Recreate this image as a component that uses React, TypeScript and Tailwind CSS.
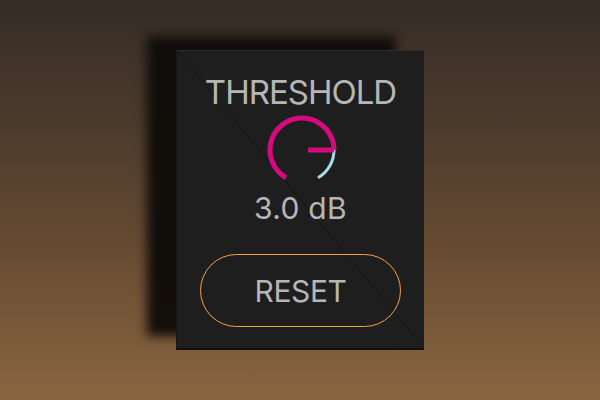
import React from "react";

function Knob() {
  // angles measured from 12 o'clock, clockwise; range -150..150, value at 90
  return (
    <svg width="76" height="76" viewBox="0 0 76 76" className="block">
      <path d="M 22 65.71 A 32 32 0 1 1 70 38" fill="none" stroke="#d50a7c" strokeWidth="5" />
      <path d="M 70 38 A 32 32 0 0 1 54 65.71" fill="none" stroke="#a9dcea" strokeWidth="3" />
      <line x1="44" y1="38" x2="70" y2="38" stroke="#d50a7c" strokeWidth="5" />
    </svg>
  );
}

export default function App() {
  return (
    <div className="w-[600px] h-[400px] flex items-center justify-center bg-[linear-gradient(to_bottom,#362c26_0%,#4a3a2c_30%,#654a32_60%,#8a6540_100%)] font-['Inter','Noto_Sans',sans-serif]">
      {/* PANEL */}
      <div className="relative w-[248px] h-[300px] flex flex-col items-center bg-[#1e1e1e] border-t border-t-[#2b2b2b] border-l border-l-[#161616] border-b-2 border-b-[#111111] shadow-[-29px_-14px_10px_rgba(16,12,9,0.97)]">
        <div className="absolute inset-0 bg-[linear-gradient(to_top_right,transparent_calc(50%-0.8px),#141414_50%,transparent_calc(50%+0.8px))]" />

        <div className="relative mt-[25px] text-[33px] leading-none text-[#b6b6b6] tracking-[-1px]">THRESHOLD</div>

        <div className="relative mt-[3px] ml-[2px]">
          <Knob />
        </div>

        <div className="relative mt-[5px] text-[30px] leading-none text-[#b6b6b6] tracking-[0.3px]">3.0 dB</div>

        <button className="relative mt-[31px] w-[201px] h-[73px] rounded-full border-[1.5px] border-[#f4a343] text-[30px] leading-none text-[#b6b6b6] tracking-[-0.4px]">
          RESET
        </button>
      </div>
    </div>
  );
}
